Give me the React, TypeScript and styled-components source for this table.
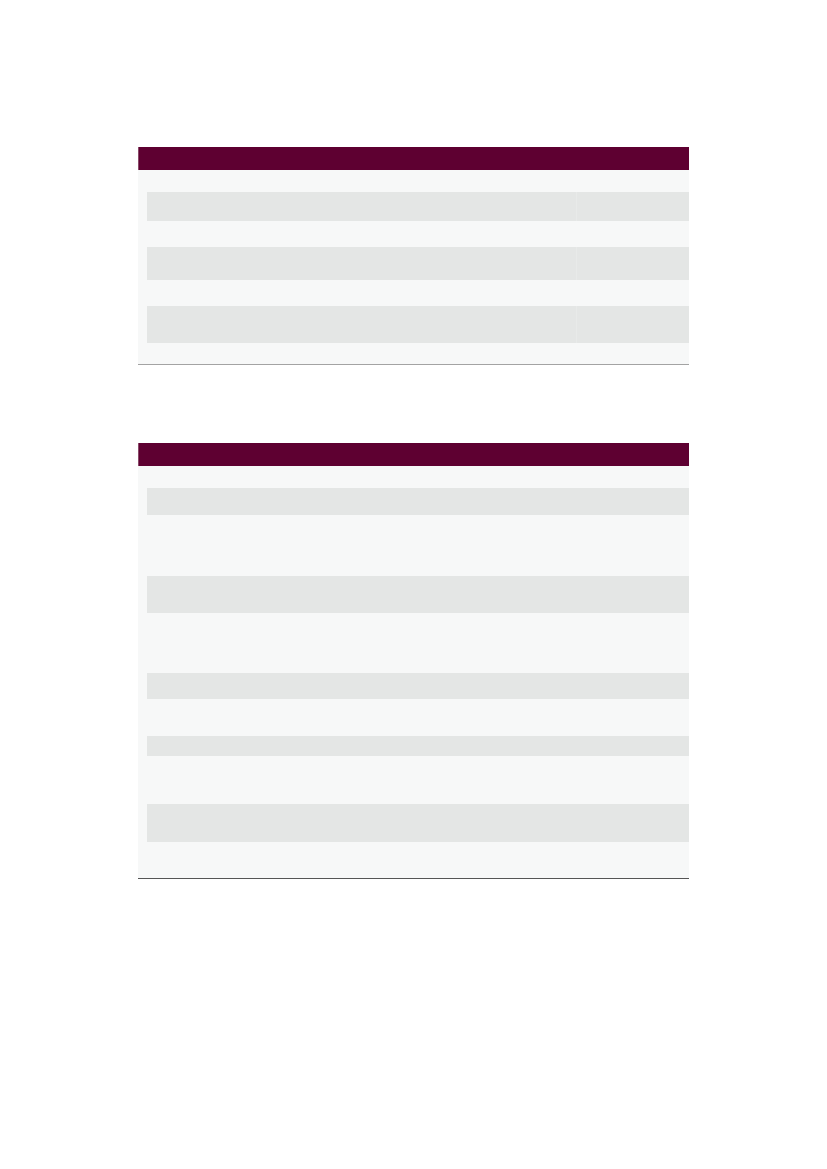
import React from "react";
import styled, { createGlobalStyle } from "styled-components";

const Global = createGlobalStyle`
  html, body { margin: 0; padding: 0; background: #ffffff; }
  body { font-family: "Liberation Sans", Arial, sans-serif; }
`;

const Page = styled.div`
  width: 827px;
  min-height: 1169px;
  box-sizing: border-box;
  padding: 147px 0 0 138px;
  display: flex;
  flex-direction: column;
  gap: 78px;
`;

const Table = styled.div<{ $rule: string }>`
  width: 551px;
  background: #f7f8f8;
  border-bottom: 1px solid ${(p) => p.$rule};
  display: flex;
  flex-direction: column;
`;

const Header = styled.div`
  height: 23px;
  background: #5e0031;
  box-shadow: inset 1px 0 0 #8a4a6a;
`;

const Row = styled.div<{ $h: number; $striped: boolean; $split: boolean }>`
  height: ${(p) => p.$h}px;
  margin-left: ${(p) => (p.$striped ? 9 : 0)}px;
  background: ${(p) => (p.$striped ? "#e4e6e5" : "transparent")};
  display: grid;
  grid-template-columns: ${(p) => (p.$split ? "429px 1fr" : "1fr")};
`;

const Cell = styled.div<{ $divider: boolean }>`
  border-left: ${(p) => (p.$divider ? "1px solid #e8eae9" : "none")};
`;

type Spec = { rule: string; split: boolean; rows: number[] };

const tables: Spec[] = [
  { rule: "#a3a3a3", split: true, rows: [22, 29, 26, 33, 26, 37, 21] },
  { rule: "#555555", split: false, rows: [22, 27, 61, 37, 60, 26, 37, 20, 48, 38, 36] },
];

export default function App() {
  return (
    <>
      <Global />
      <Page>
        {tables.map((t, ti) => (
          <Table key={ti} $rule={t.rule}>
            <Header />
            {t.rows.map((h, i) => {
              const striped = i % 2 === 1;
              const split = t.split && striped;
              return (
                <Row key={i} $h={h} $striped={striped} $split={split}>
                  <Cell $divider={false} />
                  {split && <Cell $divider={true} />}
                </Row>
              );
            })}
          </Table>
        ))}
      </Page>
    </>
  );
}
